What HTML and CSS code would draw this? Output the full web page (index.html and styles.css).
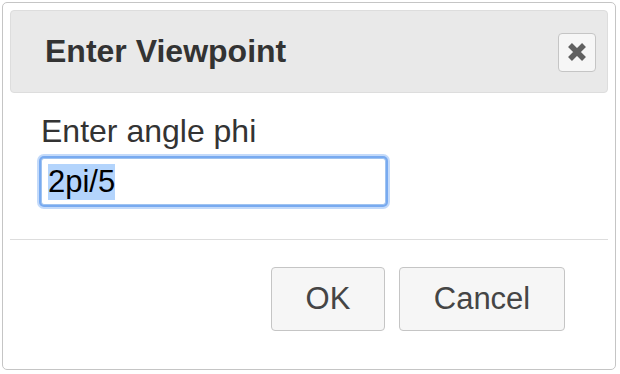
FILE: index.html
```html
<!DOCTYPE html>
<html lang="en">
<head>
<meta charset="utf-8">
<title>Enter Viewpoint</title>
<link rel="stylesheet" href="styles.css">
</head>
<body>
<div class="dialog">
  <div class="titlebar">
    <span class="title">Enter Viewpoint</span>
    <button class="close" type="button" title="Close">
      <svg width="20" height="20" viewBox="0 0 20 20" aria-hidden="true">
        <path d="M3 3 L17 17 M17 3 L3 17" stroke="#606060" stroke-width="5.5" fill="none"/>
      </svg>
    </button>
  </div>
  <div class="content">
    <label class="label" for="phi">Enter angle phi</label>
    <input class="field" id="phi" type="text" value="2pi/5">
  </div>
  <div class="buttonpane">
    <button class="btn btn-ok" type="button">OK</button>
    <button class="btn btn-cancel" type="button">Cancel</button>
  </div>
</div>
<script>
  var f = document.getElementById('phi');
  f.focus();
  f.setSelectionRange(0, f.value.length);
</script>
</body>
</html>
```
FILE: styles.css
```css
html, body {
  margin: 0;
  background: #ffffff;
}
body {
  padding: 2px 4px 0 2px;
  font-family: "Liberation Sans", Arial, sans-serif;
}
.dialog {
  box-sizing: border-box;
  width: 614px;
  border: 1px solid #c5c5c5;
  border-radius: 5px;
  padding: 7px;
  background: #ffffff;
}
.titlebar {
  box-sizing: border-box;
  height: 83px;
  border: 1px solid #dddddd;
  border-radius: 4px;
  background: #e9e9e9;
  display: flex;
  align-items: center;
  justify-content: space-between;
  padding: 0 11px 0 34px;
}
.title {
  font-size: 32px;
  font-weight: bold;
  color: #333333;
}
.close {
  box-sizing: border-box;
  width: 38px;
  height: 39px;
  margin-top: 1px;
  border: 1px solid #c5c5c5;
  border-radius: 4px;
  background: #f6f6f6;
  padding: 0;
  display: flex;
  align-items: center;
  justify-content: center;
}
.content {
  padding: 21px 0 34px 31px;
  display: flex;
  flex-direction: column;
  align-items: flex-start;
}
.label {
  font-size: 32px;
  line-height: 34px;
  color: #333333;
}
.field {
  box-sizing: border-box;
  width: 345px;
  height: 47px;
  margin-top: 10px;
  padding: 0 6px;
  font-family: "Liberation Sans", Arial, sans-serif;
  font-size: 31px;
  color: #000000;
  border: 1px solid #9fc3f0;
  border-radius: 3px;
  outline: none;
  box-shadow: 0 0 0 2px #78aaf0, 0 0 0 4px #c3dafa;
  background: #ffffff;
}
.field::selection {
  background: #b3d4fc;
  color: #000000;
}
.buttonpane {
  border-top: 1px solid #dddddd;
  padding: 27px 43px 31px 0;
  display: flex;
  justify-content: flex-end;
  gap: 14px;
}
.btn {
  box-sizing: border-box;
  height: 64px;
  border: 1px solid #c5c5c5;
  border-radius: 4px;
  background: #f6f6f6;
  color: #454545;
  font-family: "Liberation Sans", Arial, sans-serif;
  font-size: 31px;
  padding: 0;
}
.btn-ok {
  width: 114px;
}
.btn-cancel {
  width: 166px;
}
```
